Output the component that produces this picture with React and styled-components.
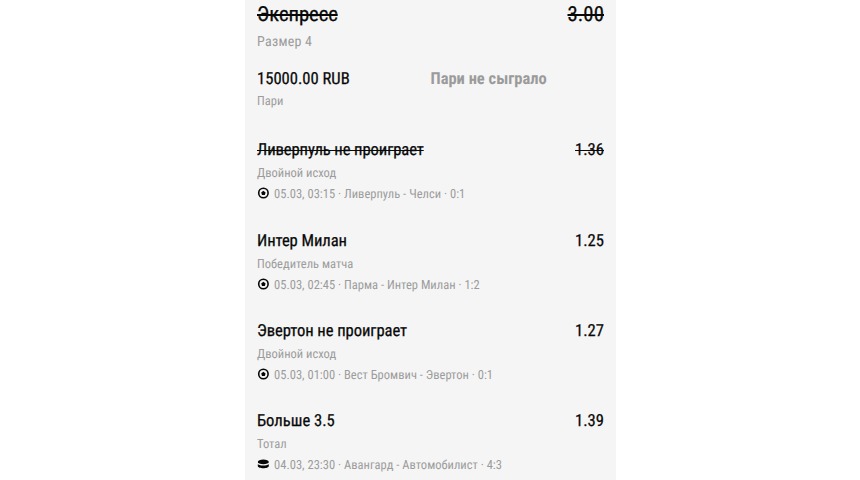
import React from "react";
import styled, { createGlobalStyle } from "styled-components";

const Global = createGlobalStyle`
  * { box-sizing: border-box; }
  body {
    margin: 0;
    background: #fff;
    font-family: "Roboto Condensed", Roboto, "Liberation Sans", sans-serif;
    font-stretch: 75%;
    text-rendering: geometricPrecision;
  }
`;

const Page = styled.main`
  width: 860px;
  height: 480px;
  overflow: hidden;
  display: flex;
  justify-content: center;
`;

const Slip = styled.section`
  width: 371px;
  height: 480px;
  margin-left: 1px;
  padding: 2px 12px 0;
  background: #f5f5f5;
  overflow: hidden;
  white-space: nowrap;
`;

const Row = styled.div`
  display: flex;
  justify-content: space-between;
`;

const Heading = styled.div`
  font-size: 20.7px;
  line-height: 27px;
  letter-spacing: ${(p) => p.$spacing || 0}px;
  color: #080808;
  -webkit-text-stroke: 0.25px #080808;
  text-decoration: line-through;
  text-decoration-thickness: 1.6px;
`;

const Size = styled.div`
  font-size: 14px;
  line-height: 26px;
  letter-spacing: 0.25px;
  color: #9c9c9c;
`;

const StakeRow = styled.div`
  display: grid;
  grid-template-columns: 173.5px 1fr;
  margin-top: 13px;
`;

const Title = styled.div`
  font-size: 16.6px;
  line-height: 24px;
  letter-spacing: ${(p) => p.$spacing || 0}px;
  color: #080808;
  -webkit-text-stroke: 0.25px #080808;
  text-decoration: ${(p) => (p.$lost ? "line-through" : "none")};
  text-decoration-thickness: 1.4px;
`;

const Result = styled.div`
  font-size: 16.5px;
  font-weight: 700;
  line-height: 24px;
  color: #9b9b9b;
`;

const Caption = styled.div`
  font-size: 12.5px;
  line-height: 20px;
  letter-spacing: ${(p) => p.$spacing || 0}px;
  color: #9c9c9c;
`;

const StakeLabel = styled(Caption)`
  line-height: 19px;
`;

const Bet = styled.article`
  height: 90.3px;
`;

const Bets = styled.div`
  margin-top: 28.4px;
`;

const Market = styled(Caption)`
  margin-top: 1px;
`;

const Meta = styled.div`
  display: flex;
  align-items: center;
  gap: 5px;
  margin-top: 1px;
`;

const Icon = styled.svg`
  width: 12px;
  height: 12px;
  flex: none;
  margin-top: -4px;
`;

function Ball() {
  return (
    <Icon viewBox="0 0 12 12">
      <circle cx="6.4" cy="6" r="4.7" fill="none" stroke="#080808" strokeWidth="1.6" />
      <path d="M6.4 3.8 8.6 5.4 7.8 8H5L4.2 5.4Z" fill="#050505" />
    </Icon>
  );
}

function Puck() {
  return (
    <Icon viewBox="0 0 12 12">
      <ellipse cx="6.3" cy="3.9" rx="5.5" ry="2.4" fill="#080808" />
      <path d="M.8 6.3c2.4 1.6 8.6 1.6 11 0v1.8c0 3-11 3-11 0Z" fill="#080808" />
    </Icon>
  );
}

const bets = [
  { title: "Ливерпуль не проиграет", spacing: -0.09, odds: "1.36", market: "Двойной исход", meta: "05.03, 03:15 · Ливерпуль - Челси · 0:1", lost: true },
  { title: "Интер Милан", spacing: -0.08, odds: "1.25", market: "Победитель матча", meta: "05.03, 02:45 · Парма - Интер Милан · 1:2" },
  { title: "Эвертон не проиграет", spacing: -0.06, odds: "1.27", market: "Двойной исход", meta: "05.03, 01:00 · Вест Бромвич - Эвертон · 0:1" },
  { title: "Больше 3.5", odds: "1.39", market: "Тотал", meta: "04.03, 23:30 · Авангард - Автомобилист · 4:3", icon: Puck },
];

export default function App() {
  return (
    <Page>
      <Global />
      <Slip>
        <Row>
          <Heading $spacing={-0.05}>Экспресс</Heading>
          <Heading $spacing={0.1}>3.00</Heading>
        </Row>
        <Size>Размер 4</Size>
        <StakeRow>
          <Title>15000.00 RUB</Title>
          <Result>Пари не сыграло</Result>
        </StakeRow>
        <StakeLabel>Пари</StakeLabel>
        <Bets>
          {bets.map(({ title, spacing, odds, market, meta, lost, icon: Sport = Ball }) => (
            <Bet key={title}>
              <Row>
                <Title $lost={lost} $spacing={spacing}>{title}</Title>
                <Title $lost={lost}>{odds}</Title>
              </Row>
              <Market>{market}</Market>
              <Meta>
                <Sport />
                <Caption $spacing={0.02}>{meta}</Caption>
              </Meta>
            </Bet>
          ))}
        </Bets>
      </Slip>
    </Page>
  );
}
